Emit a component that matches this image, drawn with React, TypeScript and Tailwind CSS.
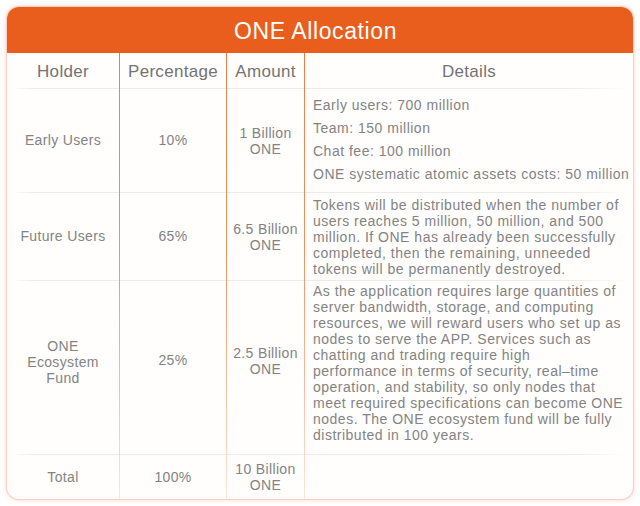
import React from "react";

const font = { fontFamily: '"Liberation Sans", Arial, sans-serif' };

const Sep = () => (
  <div className="col-span-7 h-px bg-[linear-gradient(to_right,transparent_1%,#ebebeb_4%,#ebebeb_90%,transparent_99%)]" />
);

const VLine = ({ col }: { col: string }) => (
  <div
    className={`${col} row-start-1 row-end-[-1] w-px bg-[linear-gradient(to_bottom,#ee7d47_0%,#f1925f_45%,#f6b89a_72%,#fde6dc_100%)] z-10`}
  />
);

export default function App() {
  return (
    <div className="w-[640px] h-[506px] bg-white p-[7px]" style={font}>
      <div className="w-[626px] h-[492px] rounded-[12px] overflow-hidden bg-[#fffefd] shadow-[0_0_0_1px_#f9d0c1,0_0_4px_1px_rgba(240,140,110,0.35)] flex flex-col">
        <div className="h-[46px] bg-[#ea5e1d] flex items-center justify-center text-white text-[23px] tracking-[0.6px] pt-[2px] pr-[9px]">
          ONE Allocation
        </div>
        <div className="grid grid-cols-[112px_1px_106px_1px_77px_1px_1fr] grid-rows-[35px_1px_103px_1px_87px_1px_173px_1px_44px] text-[14px] text-[#838383] tracking-[0.35px]">
          {/* header */}
          <div className="col-start-1 row-start-1 flex items-center justify-center pt-[3px] text-[17px] tracking-[0.3px] text-[#737373]">Holder</div>
          <div className="col-start-3 row-start-1 flex items-center justify-center pt-[3px] text-[17px] tracking-[0.3px] text-[#737373]">Percentage</div>
          <div className="col-start-5 row-start-1 flex items-center justify-center pt-[3px] text-[17px] tracking-[0.3px] text-[#737373]">Amount</div>
          <div className="col-start-7 row-start-1 flex items-center justify-center pt-[3px] text-[17px] tracking-[0.3px] text-[#737373]">Details</div>
          <div className="col-start-1 row-start-2 col-span-7"><Sep /></div>

          {/* row 1 */}
          <div className="col-start-1 row-start-3 flex items-center justify-center">Early Users</div>
          <div className="col-start-3 row-start-3 flex items-center justify-center">10%</div>
          <div className="col-start-5 row-start-3 flex items-center justify-center text-center leading-[16px]">1 Billion<br />ONE</div>
          <div className="col-start-7 row-start-3 flex flex-col justify-center gap-[7px] pl-[8px] pb-[2px] leading-[16px] whitespace-nowrap tracking-[0.5px]">
            <div>Early users: 700 million</div>
            <div>Team: 150 million</div>
            <div>Chat fee: 100 million</div>
            <div>ONE systematic atomic assets costs: 50 million</div>
          </div>
          <div className="col-start-1 row-start-4 col-span-7"><Sep /></div>

          {/* row 2 */}
          <div className="col-start-1 row-start-5 flex items-center justify-center">Future Users</div>
          <div className="col-start-3 row-start-5 flex items-center justify-center">65%</div>
          <div className="col-start-5 row-start-5 flex items-center justify-center text-center leading-[16px]">6.5 Billion<br />ONE</div>
          <div className="col-start-7 row-start-5 flex flex-col justify-center pl-[8px] leading-[16px] whitespace-nowrap tracking-[0.5px]">
            <div>Tokens will be distributed when the number of</div>
            <div>users reaches 5 million, 50 million, and 500</div>
            <div>million. If ONE has already been successfully</div>
            <div>completed, then the remaining, unneeded</div>
            <div>tokens will be permanently destroyed.</div>
          </div>
          <div className="col-start-1 row-start-6 col-span-7"><Sep /></div>

          {/* row 3 */}
          <div className="col-start-1 row-start-7 flex items-center justify-center text-center leading-[16px] pb-[12px]">ONE<br />Ecosystem<br />Fund</div>
          <div className="col-start-3 row-start-7 flex items-center justify-center pb-[14px]">25%</div>
          <div className="col-start-5 row-start-7 flex items-center justify-center text-center leading-[16px] pb-[14px]">2.5 Billion<br />ONE</div>
          <div className="col-start-7 row-start-7 flex flex-col justify-center pl-[8px] pb-[10px] leading-[16px] whitespace-nowrap tracking-[0.5px]">
            <div>As the application requires large quantities of</div>
            <div>server bandwidth, storage, and computing</div>
            <div>resources, we will reward users who set up as</div>
            <div>nodes to serve the APP. Services such as</div>
            <div>chatting and trading require high</div>
            <div>performance in terms of security, real–time</div>
            <div>operation, and stability, so only nodes that</div>
            <div>meet required specifications can become ONE</div>
            <div>nodes. The ONE ecosystem fund will be fully</div>
            <div>distributed in 100 years.</div>
          </div>
          <div className="col-start-1 row-start-8 col-span-7"><Sep /></div>

          {/* total */}
          <div className="col-start-1 row-start-9 flex items-center justify-center">Total</div>
          <div className="col-start-3 row-start-9 flex items-center justify-center">100%</div>
          <div className="col-start-5 row-start-9 flex items-center justify-center text-center leading-[16px]">10 Billion<br />ONE</div>
          <div className="col-start-7 row-start-9" />

          <VLine col="col-start-2" />
          <VLine col="col-start-4" />
          <VLine col="col-start-6" />
        </div>
      </div>
    </div>
  );
}
